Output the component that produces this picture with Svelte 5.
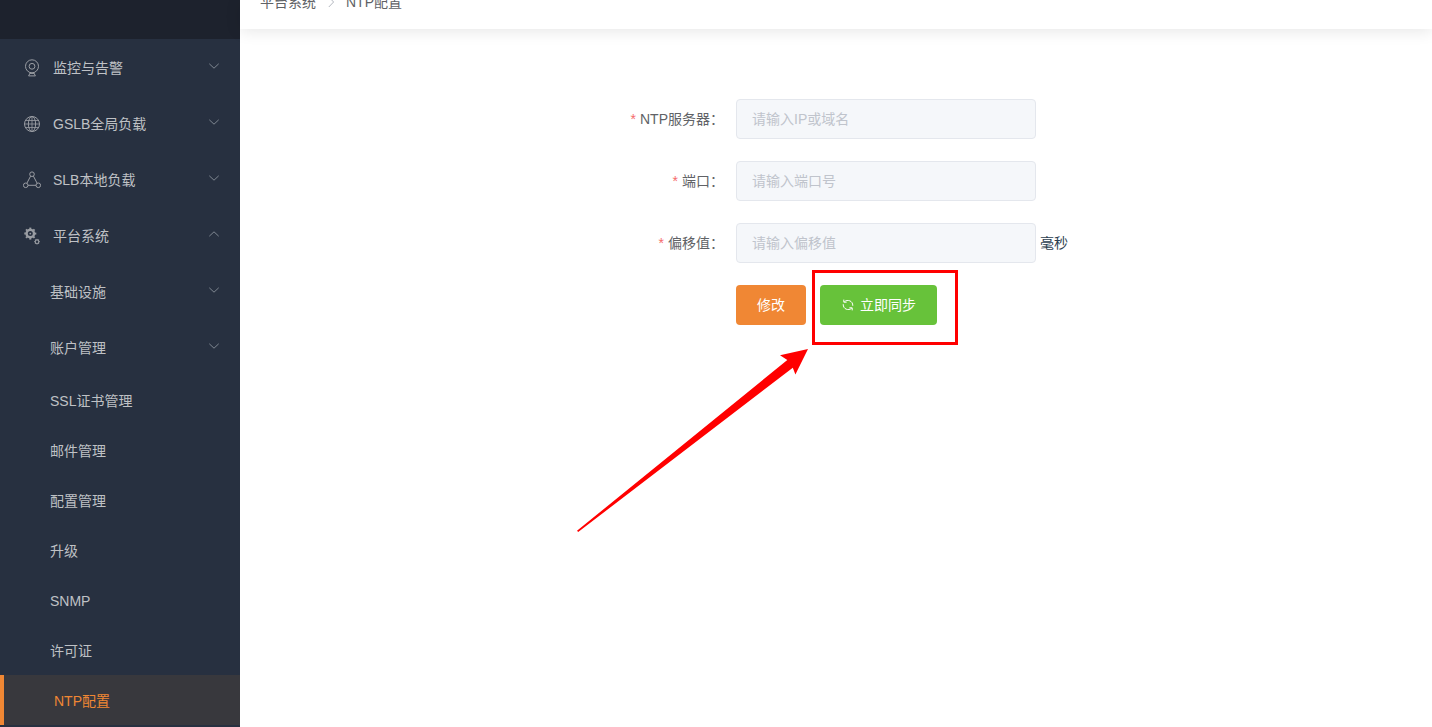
<script>
  const groups = [
    { label: '监控与告警', icon: 'camera', open: false },
    { label: 'GSLB全局负载', icon: 'globe', open: false },
    { label: 'SLB本地负载', icon: 'nodes', open: false },
    { label: '平台系统', icon: 'gears', open: true },
  ];
  const subGroups = ['基础设施', '账户管理'];
  const pages = ['SSL证书管理', '邮件管理', '配置管理', '升级', 'SNMP', '许可证', 'NTP配置'];
  const active = 'NTP配置';
  const fields = [
    { id: 'server', label: 'NTP服务器：', hint: '请输入IP或域名', unit: '' },
    { id: 'port', label: '端口：', hint: '请输入端口号', unit: '' },
    { id: 'offset', label: '偏移值：', hint: '请输入偏移值', unit: '毫秒' },
  ];
  const teeth = [0, 45, 90, 135, 180, 225, 270, 315];
</script>

{#snippet chevron(open)}
  <svg class="chevron" viewBox="0 0 12 12" aria-hidden="true">
    <path d={open ? 'M1.3 8.2 6 3.8l4.7 4.4' : 'M1.3 3.8 6 8.2l4.7-4.4'} />
  </svg>
{/snippet}

<div class="layout">
  <aside>
    <div class="brand"></div>
    <nav class="menu" aria-label="主菜单">
      {#each groups as g}
        <button class="group" type="button" aria-expanded={g.open}>
          <svg class="icon" viewBox="0 0 18 18" aria-hidden="true">
            {#if g.icon === 'camera'}
              <circle cx="9" cy="7.3" r="6.5" />
              <circle cx="9" cy="7.3" r="2.9" />
              <path d="M6.8 13.4v1.2L5.6 16.9h6.8l-1.2-2.3v-1.2M6.8 14.4h4.4" />
            {:else if g.icon === 'globe'}
              <circle cx="9" cy="9" r="7.5" />
              <ellipse cx="9" cy="9" rx="3.6" ry="7.5" />
              <path d="M9 1.5v15M1.5 9h15M2.8 5.5h12.4M2.8 12.5h12.4" stroke-width=".8" />
            {:else if g.icon === 'nodes'}
              <circle cx="9" cy="3.2" r="2.3" />
              <circle cx="2.7" cy="14.3" r="2.3" />
              <circle cx="15.3" cy="14.3" r="2.3" />
              <path d="M7.6 5.1 3.9 12.2M10.4 5.1l3.7 7.1M5 14.3h8" />
            {:else}
              <circle cx="7.3" cy="6.6" r="3.7" stroke-width="2.4" />
              {#each teeth as a}
                <path d="M7.3.6v1.6" stroke-width="2" transform="rotate({a} 7.3 6.6)" />
              {/each}
              <circle cx="7.3" cy="6.6" r=".9" fill="#9a9da3" stroke="none" />
              <circle cx="14" cy="14.7" r="1.8" stroke-width="1.1" />
              {#each teeth as a}
                <path d="M14 11.9v.9" stroke-width="1" transform="rotate({a} 14 14.7)" />
              {/each}
            {/if}
          </svg>
          <span>{g.label}</span>
          {@render chevron(g.open)}
        </button>
      {/each}
      {#each subGroups as name}
        <button class="group sub" type="button" aria-expanded="false">
          <span>{name}</span>
          {@render chevron(false)}
        </button>
      {/each}
      {#each pages as name}
        <a class="page" class:active={name === active} href="#{name}">{name}</a>
      {/each}
    </nav>
  </aside>

  <div class="content">
    <header>
      <nav class="crumbs" aria-label="面包屑">
        <span>平台系统</span>
        <svg viewBox="0 0 14 14" aria-hidden="true"><path d="M4.8 2 9.6 7l-4.8 5" /></svg>
        <span>NTP配置</span>
      </nav>
    </header>
    <main>
      <form onsubmit={(e) => e.preventDefault()}>
        {#each fields as f}
          <label for={f.id}><i>*</i>{f.label}</label>
          <div class="field">
            <input id={f.id} type="text" placeholder={f.hint} disabled />
            {#if f.unit}<span>{f.unit}</span>{/if}
          </div>
        {/each}
        <div class="actions">
          <button class="btn edit" type="button">修改</button>
          <div class="sync-wrap">
            <button class="btn sync" type="button">
              <svg viewBox="0 0 14 14" aria-hidden="true">
                <path d="M3.4 3.6C6.6 1.2 11.9 2.6 11.8 7.8M10.6 10.4C7.4 12.8 2.1 11.4 2.2 6.2M2.8 1.6v2.6h2.8M11.2 12.4V9.8H8.4" />
              </svg>
              立即同步
            </button>
            <div class="highlight"></div>
            <svg class="arrow" viewBox="0 0 232 184" aria-hidden="true">
              <path d="M231 1 203 7.3l7.3 4.7L0 182.8l1.2 1.2L215.8 19.7l2.6 6.8z" />
            </svg>
          </div>
        </div>
      </form>
    </main>
  </div>
</div>

<style>
  :global(body) {
    margin: 0;
    background: #fff;
  }
  * {
    box-sizing: border-box;
  }
  .layout {
    display: flex;
    height: 100vh;
    overflow: hidden;
    font: 14px/20px 'Liberation Sans', 'Noto Sans CJK SC', sans-serif;
    color: #2c3e50;
  }
  button,
  input {
    font: inherit;
  }
  svg {
    fill: none;
    stroke: currentColor;
    flex: none;
  }
  aside {
    flex: 0 0 240px;
    background: #273040;
  }
  .brand {
    height: 39px;
    background: #1d222d;
  }
  .menu {
    display: flex;
    flex-direction: column;
  }
  .group {
    display: flex;
    align-items: center;
    height: 56px;
    padding: 2px 20px 0 23px;
    border: 0;
    background: none;
    color: #bfc1c5;
    text-align: left;
    cursor: pointer;
  }
  .group span {
    flex: 1;
  }
  .sub {
    padding-left: 50px;
  }
  .icon {
    width: 18px;
    height: 18px;
    margin-right: 12px;
    color: #9a9da3;
  }
  .chevron {
    width: 12px;
    height: 12px;
    margin-bottom: 5px;
    color: #7f8791;
  }
  .page {
    display: flex;
    align-items: center;
    height: 50px;
    padding: 2px 20px 0 50px;
    color: #bfc1c5;
    text-decoration: none;
  }
  .active {
    border-left: 4px solid #f08734;
    background: #38383d;
    color: #f08734;
  }
  .content {
    flex: 1;
    min-width: 0;
    display: flex;
    flex-direction: column;
  }
  header {
    display: flex;
    padding: 0 20px 17px;
    background: #fff;
    box-shadow: 0 2px 16px rgba(0, 0, 0, 0.1);
  }
  .crumbs {
    display: flex;
    align-items: center;
    gap: 8px;
    margin-top: -8px;
    color: #606266;
  }
  .crumbs svg {
    width: 14px;
    height: 14px;
    color: #b4b8c0;
  }
  main {
    padding-top: 70px;
  }
  form {
    display: grid;
    grid-template-columns: 136px 336px;
    justify-content: center;
    row-gap: 22px;
  }
  label {
    padding-right: 12px;
    line-height: 40px;
    text-align: right;
    white-space: nowrap;
    color: #606266;
  }
  i {
    margin-right: 4px;
    font-style: normal;
    color: #f56c6c;
  }
  .field {
    display: flex;
    align-items: center;
    gap: 4px;
  }
  input {
    width: 300px;
    height: 40px;
    padding: 0 15px;
    border: 1px solid #e4e7ed;
    border-radius: 4px;
    background: #f5f7fa;
  }
  input::placeholder {
    color: #c0c4cc;
    opacity: 1;
  }
  .actions {
    grid-column: 2;
    display: flex;
    gap: 14px;
  }
  .btn {
    display: flex;
    align-items: center;
    gap: 5px;
    height: 40px;
    padding: 0 21px;
    border: 0;
    border-radius: 4px;
    color: #fff;
    white-space: nowrap;
    cursor: pointer;
  }
  .edit {
    background: #f08734;
  }
  .sync {
    background: #67c23a;
  }
  .sync svg {
    width: 14px;
    height: 14px;
  }
  .sync-wrap {
    position: relative;
  }
  .highlight {
    position: absolute;
    left: -8px;
    top: -15px;
    width: 146px;
    height: 75px;
    border: 3px solid #f00;
    pointer-events: none;
  }
  .arrow {
    position: absolute;
    left: -243px;
    top: 63px;
    width: 232px;
    height: 184px;
    fill: #f00;
    stroke: none;
    pointer-events: none;
  }
</style>
